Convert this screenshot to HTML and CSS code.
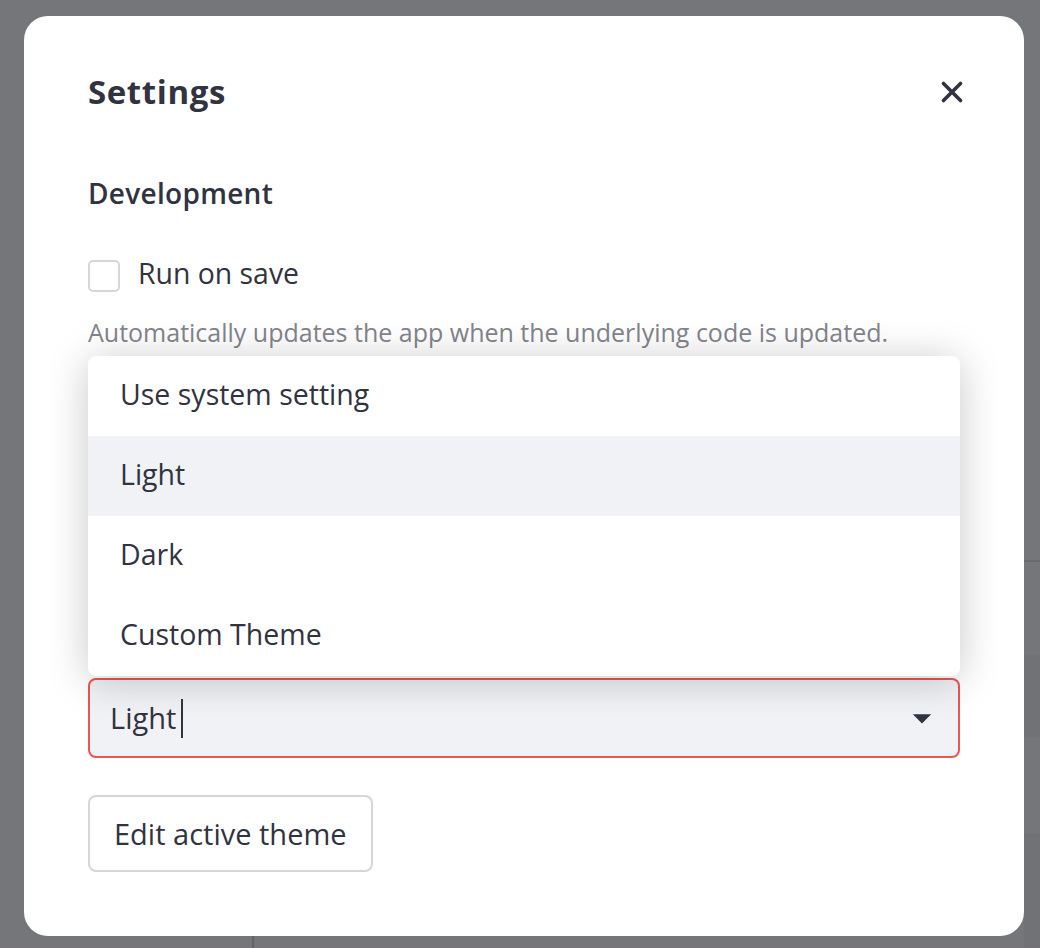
FILE: index.html
```html
<!DOCTYPE html>
<html lang="en">
<head>
<meta charset="utf-8">
<title>Settings</title>
<link rel="stylesheet" href="styles.css">
</head>
<body>
<div class="backdrop-strip"></div>
<div class="backdrop-line"></div>
<div class="modal" role="dialog" aria-label="Settings">
  <div class="modal-header">
    <h1 class="modal-title">Settings</h1>
    <button class="close-btn" aria-label="Close">
      <svg width="24" height="24" viewBox="0 0 24 24"><path d="M3.5 3.5L20.5 20.5M20.5 3.5L3.5 20.5" stroke="#31333f" stroke-width="3.7" stroke-linecap="round" fill="none"/></svg>
    </button>
  </div>
  <h2 class="section-title">Development</h2>
  <label class="check-row">
    <span class="checkbox"></span>
    <span class="check-label">Run on save</span>
  </label>
  <p class="caption">Automatically updates the app when the underlying code is updated.</p>
  <div class="theme-block">
    <ul class="menu">
      <li class="option">Use system setting</li>
      <li class="option active">Light</li>
      <li class="option">Dark</li>
      <li class="option">Custom Theme</li>
    </ul>
    <div class="select">
      <span class="select-value">Light<span class="cursor"></span></span>
      <svg class="select-arrow" width="44" height="44" viewBox="0 0 24 24"><path d="M7 10l5 5 5-5z" fill="#31333f"/></svg>
    </div>
  </div>
  <button class="edit-btn">Edit active theme</button>
</div>
</body>
</html>
```
FILE: styles.css
```css
* { box-sizing: border-box; }
html, body { height: 100%; }
body {
  margin: 0;
  padding: 16px 16px 0 24px;
  font-family: "Open Sans", "Noto Sans", sans-serif;
  color: #31333f;
  overflow: hidden;
  position: relative;
  background: #75767a;
}
.backdrop-strip {
  position: absolute;
  right: 0;
  top: 0;
  width: 16px;
  height: 948px;
  background:
    linear-gradient(to bottom,
      #75767a 0, #75767a 560px,
      #696a6e 560px, #696a6e 562px,
      #75767a 562px, #75767a 655px,
      #717276 655px, #717276 737px,
      #75767a 737px, #75767a 833px,
      #717276 833px, #717276 948px);
}
.backdrop-line {
  position: absolute;
  left: 252px;
  top: 930px;
  width: 2px;
  height: 30px;
  background: #636468;
}
.modal {
  position: relative;
  width: 1000px;
  background: #ffffff;
  border-radius: 24px;
  padding: 58px 64px 64px 64px;
}
.modal-header {
  display: flex;
  align-items: center;
  justify-content: space-between;
  height: 36px;
}
.modal-title {
  margin: 0;
  font-size: 33px;
  line-height: 36px;
  font-weight: 700;
  letter-spacing: 0.6px;
}
.close-btn {
  width: 24px;
  height: 24px;
  padding: 0;
  margin-right: -4px;
  border: 0;
  background: none;
  display: flex;
}
.section-title {
  margin: 65px 0 0 0;
  font-size: 28px;
  line-height: 36px;
  font-weight: 600;
  letter-spacing: 0.3px;
}
.check-row {
  display: flex;
  align-items: flex-start;
  gap: 18px;
  margin-top: 42px;
  height: 40px;
}
.checkbox {
  width: 32px;
  height: 32px;
  margin-top: 7px;
  border: 2px solid #d6d6d9;
  border-radius: 5px;
  background: #fff;
  flex: none;
}
.check-label {
  font-size: 28.4px;
  line-height: 40px;
}
.caption {
  margin: 22px 0 0 0;
  font-size: 25px;
  line-height: 34px;
  color: #83848c;
}
.theme-block {
  position: relative;
  margin-top: 329px;
}
.menu {
  position: absolute;
  left: 0;
  right: 0;
  bottom: calc(100% + 2px);
  margin: 0;
  padding: 0;
  list-style: none;
  background: #fff;
  border-radius: 8px;
  box-shadow: 0 4px 40px rgba(0, 0, 0, 0.22);
  overflow: hidden;
  z-index: 2;
}
.option {
  height: 80px;
  padding: 0 0 4px 32px;
  font-size: 28.5px;
  line-height: 76px;
}
.option.active { background: #f0f2f6; }
.select {
  display: flex;
  align-items: center;
  height: 80px;
  padding: 0 14px 0 20px;
  border: 2px solid #ec5650;
  border-radius: 8px;
  background: #f0f2f6;
}
.select-value {
  flex: 1;
  display: flex;
  align-items: center;
  font-size: 29px;
  line-height: 40px;
}
.cursor {
  display: inline-block;
  width: 2px;
  height: 39px;
  margin-left: 5px;
  background: #31333f;
}
.select-arrow { flex: none; }
.edit-btn {
  display: block;
  margin-top: 37px;
  height: 77px;
  padding: 0 24px;
  border: 2px solid #d6d6d9;
  border-radius: 8px;
  background: #fff;
  font-family: inherit;
  font-size: 29px;
  color: #31333f;
}
```
